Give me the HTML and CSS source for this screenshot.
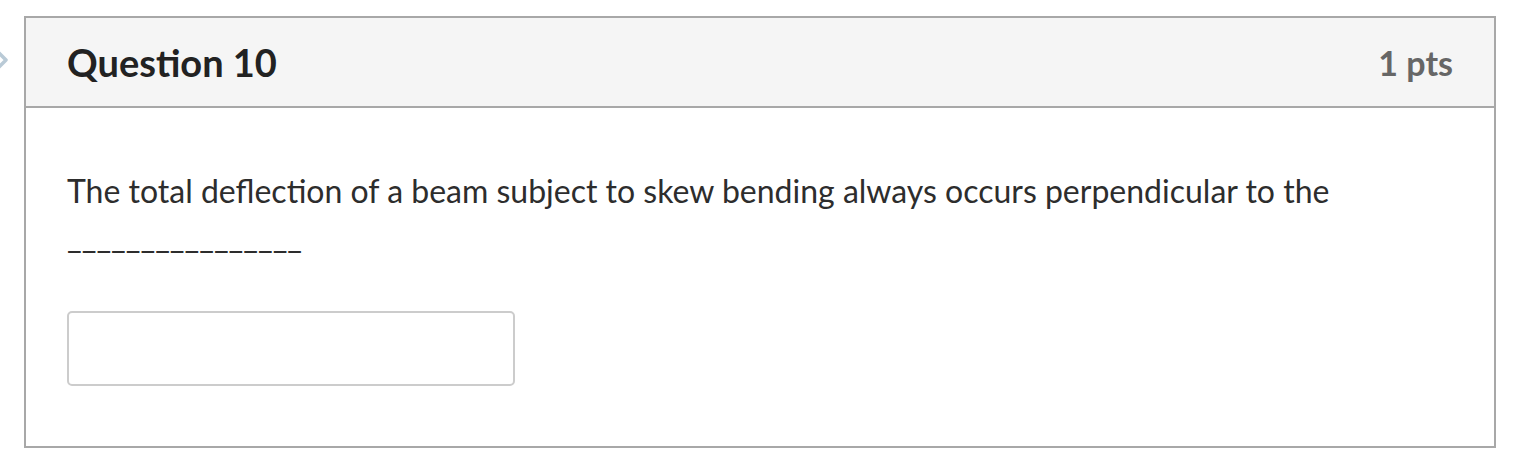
FILE: index.html
```html
<!DOCTYPE html>
<html>
<head>
<meta charset="utf-8">
<link rel="stylesheet" href="styles.css">
</head>
<body>
<div class="page">
  <svg class="nav-arrow" width="12" height="24" viewBox="0 0 12 24"><path d="M-3 3 L6 12 L-3 21" fill="none" stroke="#b9cad6" stroke-width="3.5" stroke-linejoin="round"/></svg>
  <div class="question">
    <div class="q-header">
      <h2 class="q-title">Question 10</h2>
      <span class="q-pts">1 pts</span>
    </div>
    <div class="q-body">
      <p class="q-text">The total deflection of a beam subject to skew bending always occurs perpendicular to the</p>
      <p class="q-text">________________</p>
      <div class="answer"><input class="answer-input" type="text"></div>
    </div>
  </div>
</div>
</body>
</html>
```

FILE: styles.css
```css
html, body {
  margin: 0;
  padding: 0;
  background: #fff;
}
.page {
  position: relative;
  padding: 16px 36px 0 24px;
  font-family: Lato, "Liberation Sans", sans-serif;
}
.nav-arrow {
  position: absolute;
  left: 0;
  top: 48px;
}
.question {
  border: 2px solid #a8a8a8;
  box-sizing: border-box;
  width: 1472px;
}
.q-header {
  display: flex;
  justify-content: space-between;
  align-items: center;
  background: #f5f5f5;
  border-bottom: 2px solid #a8a8a8;
  height: 88px;
  padding: 0 41px;
}
.q-title {
  margin: 0;
  font-size: 38px;
  font-weight: 700;
  color: #222;
}
.q-pts {
  font-size: 34px;
  font-weight: 700;
  color: #666;
}
.q-body {
  padding: 60px 41px 60px;
}
.q-text {
  margin: 0;
  font-size: 32px;
  line-height: 45px;
  color: #2d2d2d;
}
.answer {
  margin-top: 53px;
}
.answer-input {
  display: block;
  box-sizing: border-box;
  width: 448px;
  height: 75px;
  margin: 0;
  border: 2px solid #cccccc;
  border-radius: 5px;
  background: #fff;
  padding: 0;
}
```
